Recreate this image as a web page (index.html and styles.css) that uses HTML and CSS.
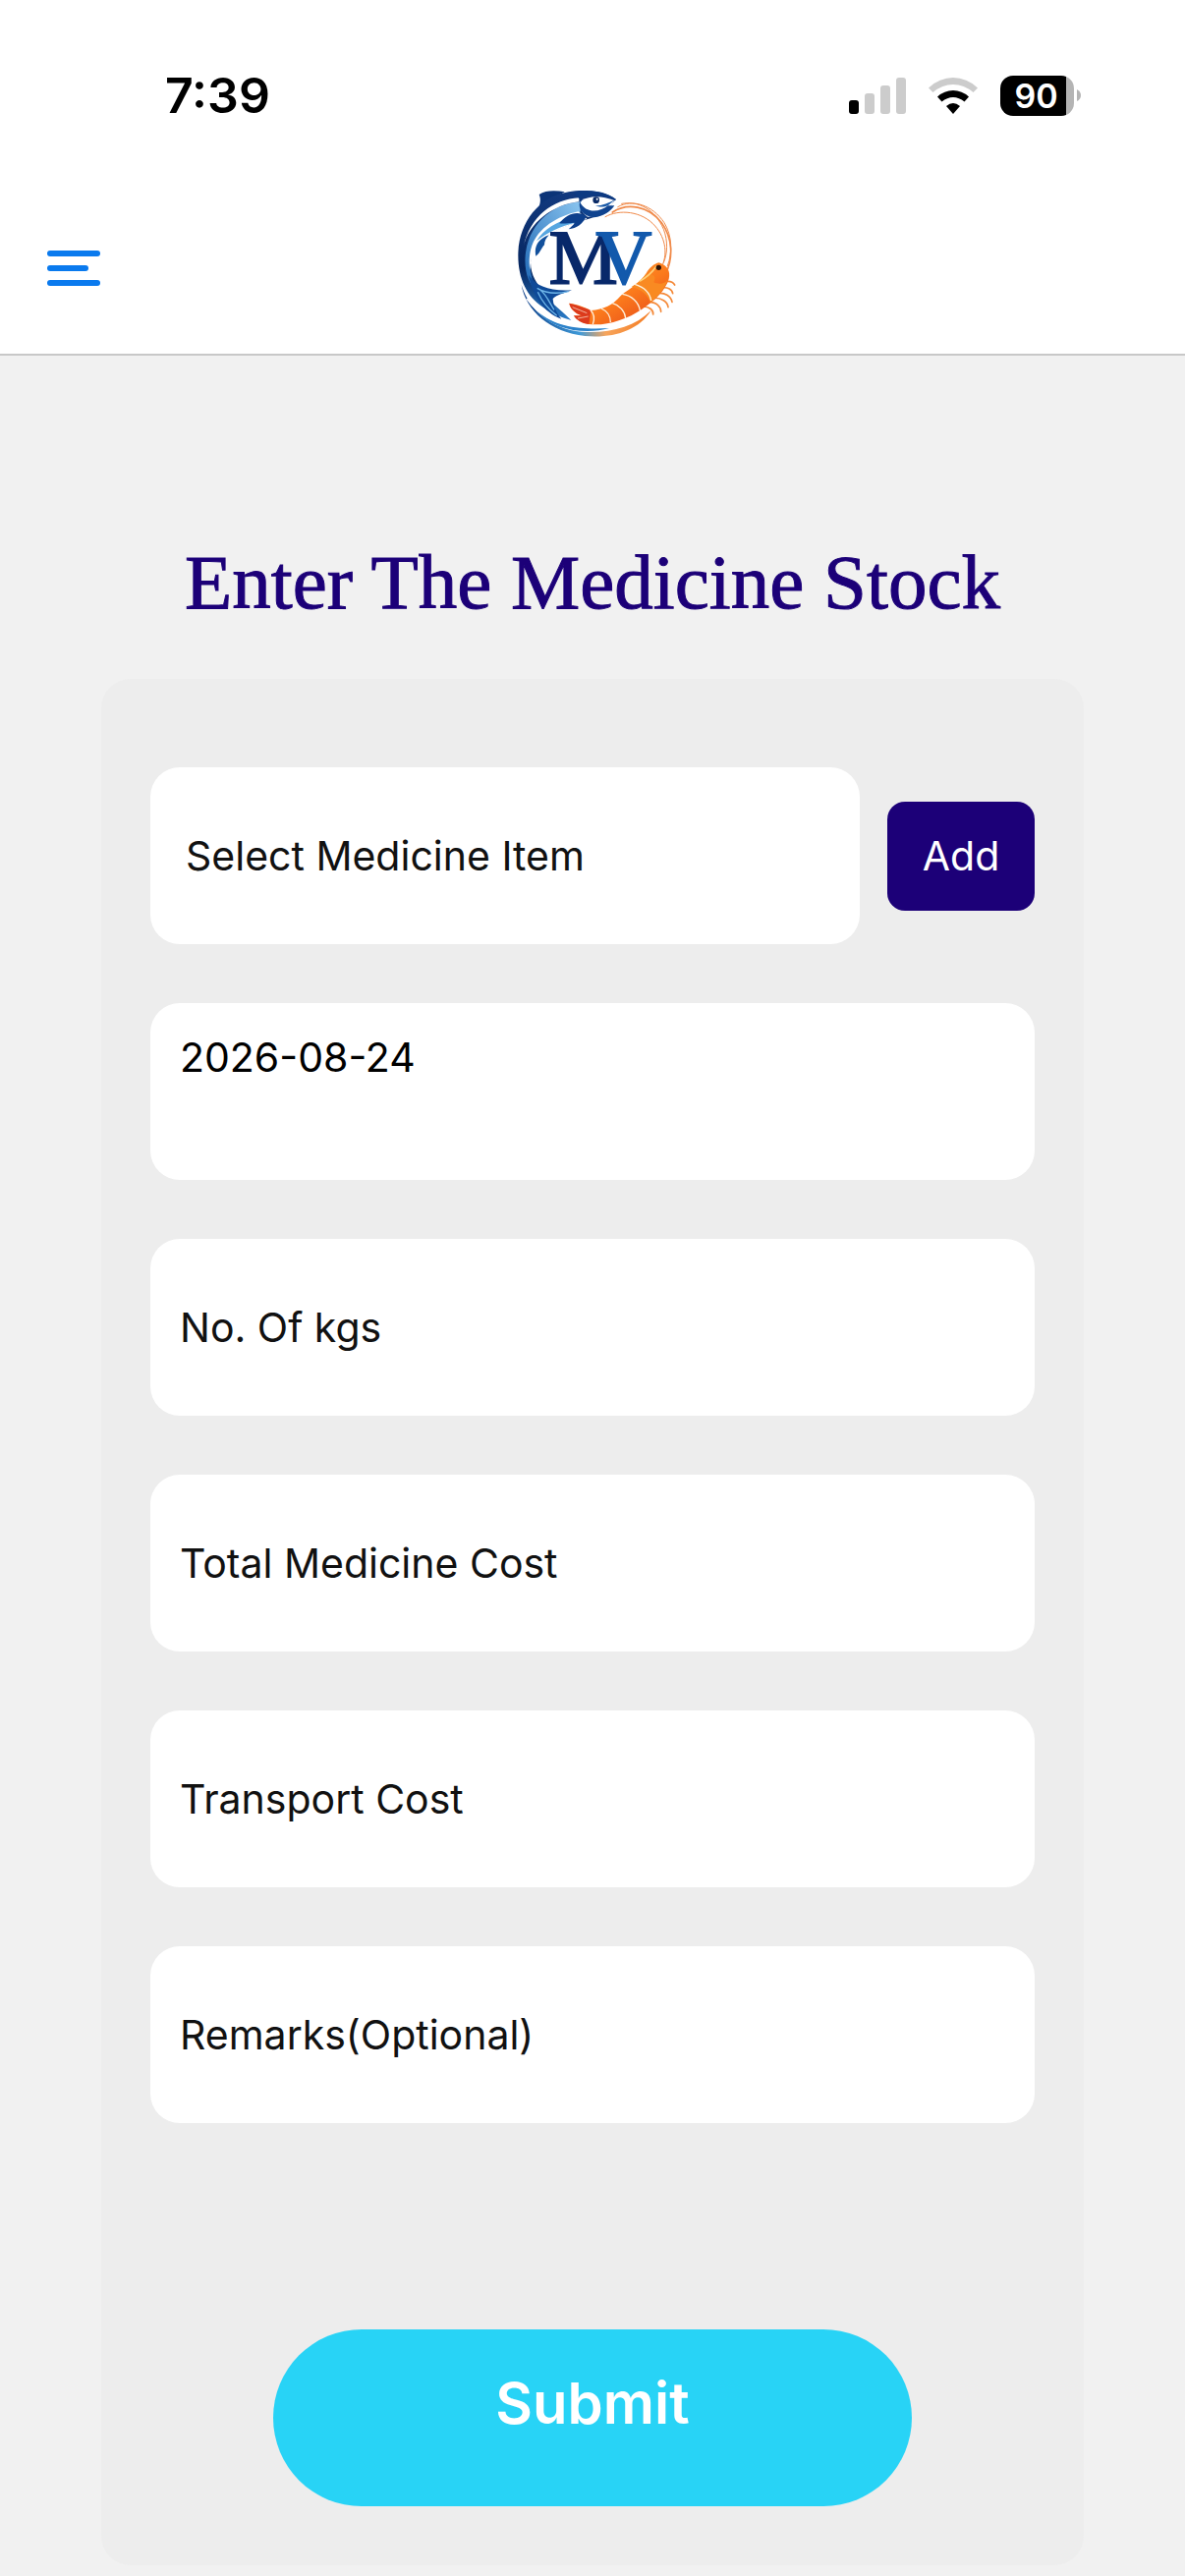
FILE: index.html
```html
<!DOCTYPE html>
<html lang="en">
<head>
<meta charset="UTF-8">
<meta name="viewport" content="width=device-width, initial-scale=1.0">
<title>Medicine Stock</title>
<link rel="stylesheet" href="styles.css">
</head>
<body>

  <!-- Status bar -->
  <div class="status-bar">
    <span class="time">7:39</span>
    <div class="status-icons">
      <svg class="signal" viewBox="0 0 58 38">
        <rect x="0" y="24" width="10" height="14" rx="3" fill="#000"/>
        <rect x="16" y="17" width="10" height="21" rx="3"/>
        <rect x="32" y="9" width="10" height="29" rx="3"/>
        <rect x="48" y="1" width="10" height="37" rx="3"/>
      </svg>
      <svg class="wifi" viewBox="0 0 50 38">
        <path d="M0 11.5 Q11 1 25 1 T50 11.5 L45.500 16 Q36 8 25 8 T4.500 16 Z" fill="#ccc"/>
        <path d="M9 20.500 Q16 14 25 14 T41 20.500 L36.500 25.500 Q31 21 25 21 T13.500 25.500 Z"/>
        <path d="M18 30 Q25 24 32 30 L25 38 Z"/>
      </svg>
      <div class="battery">
        <span class="battery-level">90</span>
        <svg class="battery-tip" viewBox="0 0 4 12"><path d="M0 0 Q4 2 4 6 T0 12 Z"/></svg>
      </div>
    </div>
  </div>

  <!-- App header -->
  <header class="app-header">
    <button class="menu-btn" type="button" aria-label="Menu">
      <svg viewBox="0 0 54 36">
        <rect width="54" height="6" rx="3"/>
        <rect y="15" width="42" height="6" rx="3"/>
        <rect y="30" width="54" height="6" rx="3"/>
      </svg>
    </button>
    <svg class="logo" viewBox="-6 18 570 522" role="img" aria-label="MV">
      <defs>
        <linearGradient id="back" x1="0" y1="0" x2="0" y2="1">
          <stop offset="0" stop-color="#123a80"/>
          <stop offset="0.600" stop-color="#06265f"/>
          <stop offset="1" stop-color="#2a7cc8"/>
        </linearGradient>
        <linearGradient id="stripe" x1="0" y1="1" x2="1" y2="0">
          <stop offset="0" stop-color="#1c66b4"/>
          <stop offset="1" stop-color="#8cc6f0"/>
        </linearGradient>
        <linearGradient id="sweep" x1="0" y1="0" x2="1" y2="0">
          <stop offset="0" stop-color="#0c3c86"/>
          <stop offset="0.450" stop-color="#3f9ad8"/>
          <stop offset="0.650" stop-color="#f7a55c"/>
          <stop offset="1" stop-color="#f47a20"/>
        </linearGradient>
        <linearGradient id="shrimp" x1="0" y1="0" x2="1" y2="1">
          <stop offset="0" stop-color="#ffae3c"/>
          <stop offset="0.550" stop-color="#fb7a1c"/>
          <stop offset="1" stop-color="#e2401a"/>
        </linearGradient>
      </defs>

      <!-- antennae -->
      <g fill="none" stroke="#f08a4a" stroke-linecap="round">
        <path d="M318 122 C360 98 430 104 470 150 C505 190 508 240 490 276" stroke-width="3"/>
        <path d="M340 108 C385 78 450 88 490 140 C524 186 526 250 502 296" stroke-width="5"/>
        <path d="M356 92 C400 66 462 86 498 140 C522 180 524 230 508 272" stroke-width="3"/>
        <path d="M368 82 C420 72 470 100 496 160 C510 196 508 236 496 262" stroke-width="3"/>
      </g>

      <!-- sweep under the fish -->
      <path d="M62 330 C90 420 170 472 262 474 C340 476 410 456 458 408 C420 470 340 494 256 486 C150 474 76 410 62 330 Z" fill="url(#sweep)"/>
      <path d="M110 410 C170 462 250 466 330 462 C260 482 160 470 110 410 Z" fill="#2b82ca"/>
      <path d="M78 372 C120 430 180 452 240 456" fill="none" stroke="#fff" stroke-width="4"/>

      <!-- fish body -->
      <path d="M116 54 C136 40 168 42 194 46 L150 72 L114 96 C120 80 122 68 116 54 Z" fill="#0b3478"/>
      <path d="M350 68 C314 42 250 38 206 46 C110 62 52 146 52 240 C52 310 78 366 128 398 C160 420 190 430 214 438 C176 400 146 384 134 352 C110 330 90 300 90 262 C92 220 110 196 142 178 C190 146 262 134 316 112 Z" fill="url(#back)"/>
      <path d="M246 76 C160 80 84 140 74 240 C70 290 84 326 110 352 C88 310 82 262 98 222 C122 164 190 130 240 114 Z" fill="url(#stripe)"/>
      <path d="M238 64 C160 68 88 120 68 214 C84 140 160 84 238 76 Z" fill="#fff"/>
      <path d="M236 106 C170 120 112 158 94 210 C86 232 84 262 88 284 C90 236 110 200 146 176 C190 150 236 140 262 128 Z" fill="#fff"/>
      <path d="M220 124 C170 136 130 160 108 196 C140 170 184 150 226 140 Z" fill="#57a6e0"/>

      <!-- head -->
      <path d="M346 72 C310 58 272 56 246 72 C236 90 244 110 264 122 C296 122 330 104 346 72 Z" fill="#fff"/>
      <path d="M350 68 C310 38 256 40 220 48 L238 66 C270 52 318 54 350 72 Z" fill="#0d3a82"/>
      <path d="M240 76 C234 100 252 122 284 124 C312 122 336 104 346 88 L326 88 C302 108 258 114 240 76 Z" fill="#0f438f"/>
      <path d="M350 68 L326 88 C312 94 298 92 288 88 C310 88 328 80 350 68 Z" fill="#1a5aa8"/>
      <circle cx="290" cy="71" r="10" fill="#0a2a66"/>
      <circle cx="293" cy="68" r="3" fill="#fff"/>

      <!-- fins -->
      <path d="M178 142 C200 112 234 102 260 120 C252 142 230 158 206 160 C216 150 222 146 224 140 C206 140 196 144 178 142 Z" fill="#0d3f8c"/>
      <path d="M146 178 C112 190 100 214 106 242 C118 234 124 216 132 208 C132 196 138 186 146 178 Z" fill="#12509c"/>

      <!-- tail -->
      <path d="M84 300 C106 334 150 350 216 346 C190 356 172 360 158 372 C160 396 168 414 184 434 C130 414 96 364 84 300 Z" fill="#0e4a98"/>
      <path d="M110 340 C140 358 170 358 206 350 M112 352 C124 380 144 404 170 424 M120 346 C140 362 148 386 162 406" fill="none" stroke="#6fb7ea" stroke-width="4"/>

      <text class="logo-text" x="146" y="325"><tspan class="logo-m">M</tspan><tspan class="logo-v" dx="-66">V</tspan></text>

      <!-- shrimp legs -->
      <g fill="none" stroke="#f48a3a" stroke-width="5" stroke-linecap="round">
        <path d="M494 322 C512 316 524 320 530 330"/>
        <path d="M486 340 C508 334 522 344 524 356"/>
        <path d="M476 356 C500 352 518 364 522 382"/>
        <path d="M464 370 C490 368 508 382 510 398"/>
        <path d="M450 382 C474 382 488 396 488 412"/>
        <path d="M432 396 C454 396 466 408 464 420"/>
      </g>

      <!-- shrimp body -->
      <path d="M482 262 C508 270 518 290 512 312 C502 346 470 378 430 404 C384 436 320 456 268 450 C246 448 230 436 222 424 L246 424 C226 416 212 404 208 386 C236 390 256 398 274 408 C314 404 340 392 366 362 C392 340 424 326 442 296 C452 278 466 266 482 262 Z" fill="url(#shrimp)"/>
      <path d="M442 296 C428 316 410 328 398 336 C420 342 444 352 456 384 C480 366 500 340 508 316 C500 326 484 330 466 322 C474 304 468 296 442 296 Z" fill="#f98a22"/>
      <path d="M208 386 C234 392 256 400 274 408 L268 450 C246 448 230 438 222 424 L246 424 C226 416 212 404 208 386 Z" fill="#dc3a1c"/>
      <g fill="none" stroke="#fff2dc" stroke-width="4">
        <path d="M408 328 C434 336 454 352 458 378"/>
        <path d="M370 358 C398 362 420 382 424 408"/>
        <path d="M340 386 C362 392 378 410 380 432"/>
        <path d="M306 402 C324 410 334 426 334 444"/>
        <path d="M272 406 C284 418 286 434 280 450"/>
        <path d="M218 398 L262 416 M234 432 L266 426" stroke-width="2"/>
      </g>
      <path d="M424 318 C448 306 462 290 474 274" fill="none" stroke="#ffd27a" stroke-width="5" stroke-linecap="round"/>
      <circle cx="481" cy="277" r="8" fill="#2a1208"/>
    </svg>
  </header>

  <main class="page">
    <h1>Enter The Medicine Stock</h1>

    <form class="card">
      <div class="item-row">
        <select class="field field-select" aria-label="Select Medicine Item">
          <option>Select Medicine Item</option>
        </select>
        <button class="add-btn" type="button">Add</button>
      </div>
      <input class="field field-date" type="text" value="2026-08-24" aria-label="Date">
      <input class="field" type="text" placeholder="No. Of kgs" aria-label="No. Of kgs">
      <input class="field" type="text" placeholder="Total Medicine Cost" aria-label="Total Medicine Cost">
      <input class="field" type="text" placeholder="Transport Cost" aria-label="Transport Cost">
      <input class="field" type="text" placeholder="Remarks(Optional)" aria-label="Remarks(Optional)">
      <button class="submit-btn" type="submit">Submit</button>
    </form>
  </main>

</body>
</html>
```
FILE: styles.css
```css
*, *::before, *::after { box-sizing: border-box; margin: 0; padding: 0; }

:root {
  --bg: #f1f1f1;
  --card: #ededed;
  --navy: #1c0078;
  --blue: #0a7aee;
  --cyan: #28d3f6;
  --text: #111;
}

body {
  font-family: Inter, "Liberation Sans", sans-serif;
  font-size: 41px;
  background: var(--bg);
  color: var(--text);
}

button, input, select {
  font: inherit;
  color: inherit;
  border: none;
}

/* ── STATUS BAR ── */
.status-bar {
  height: 186px;
  padding: 67px 106px 0 168px;
  display: flex;
  justify-content: space-between;
  align-items: flex-start;
  background: #fff;
  color: #000;
}

.time {
  font-size: 50px;
  font-weight: 600;
  line-height: 60px;
}

.status-icons {
  display: flex;
  align-items: center;
  gap: 23px;
  height: 60px;
}

.signal { width: 58px; height: 38px; fill: #ccc; }
.wifi { width: 50px; height: 38px; }

.battery {
  display: flex;
  align-items: center;
  gap: 3px;
}

.battery-level {
  width: 75px;
  height: 41px;
  padding-right: 2px;
  border-radius: 13px;
  background: linear-gradient(90deg, #000 90%, #b4b4b4 90%);
  color: #fff;
  font-size: 34px;
  font-weight: 600;
  line-height: 41px;
  text-align: center;
}

.battery-tip { width: 4px; height: 12px; fill: #b4b4b4; }

/* ── HEADER ── */
.app-header {
  display: grid;
  grid-template-columns: 1fr auto 1fr;
  align-items: center;
  padding: 0 48px;
  background: #fff;
  border-bottom: 2px solid #c8c8c8;
}

.menu-btn {
  justify-self: start;
  display: flex;
  background: none;
}

.menu-btn svg { width: 54px; height: 36px; fill: var(--blue); }

.logo { width: 190px; height: 174px; }

.logo-text {
  font-family: "Liberation Serif", serif;
  font-size: 236px;
  stroke-width: 6px;
}

.logo-m { fill: #08286a; stroke: #08286a; }
.logo-v { fill: #1259ac; stroke: #1259ac; }

/* ── FORM ── */
.page {
  padding: 181px 103px 12px;
}

h1 {
  font-family: "Liberation Serif", serif;
  font-size: 79px;
  font-weight: 400;
  line-height: 100px;
  text-align: center;
  color: var(--navy);
  -webkit-text-stroke: 1px var(--navy);
  margin-bottom: 48px;
}

.card {
  display: flex;
  flex-direction: column;
  gap: 60px;
  padding: 90px 50px 60px;
  border-radius: 30px;
  background: var(--card);
}

.item-row {
  display: flex;
  align-items: center;
  gap: 28px;
}

.field {
  width: 100%;
  height: 180px;
  padding: 0 30px;
  border-radius: 30px;
  background: #fff;
  line-height: 50px;
}

.field::placeholder { color: var(--text); opacity: 1; }

.field-select {
  appearance: none;
  flex: 1;
  padding: 0 36px;
}

.field-date {
  padding: 30px 30px 100px;
  color: #000;
}

.add-btn {
  width: 150px;
  height: 111px;
  border-radius: 18px;
  background: var(--navy);
  color: #fff;
}

.submit-btn {
  align-self: center;
  width: 100%;
  max-width: 650px;
  height: 180px;
  margin-top: 150px;
  padding-bottom: 30px;
  border-radius: 90px;
  background: var(--cyan);
  color: #fff;
  font-size: 58px;
  font-weight: 600;
}
```
